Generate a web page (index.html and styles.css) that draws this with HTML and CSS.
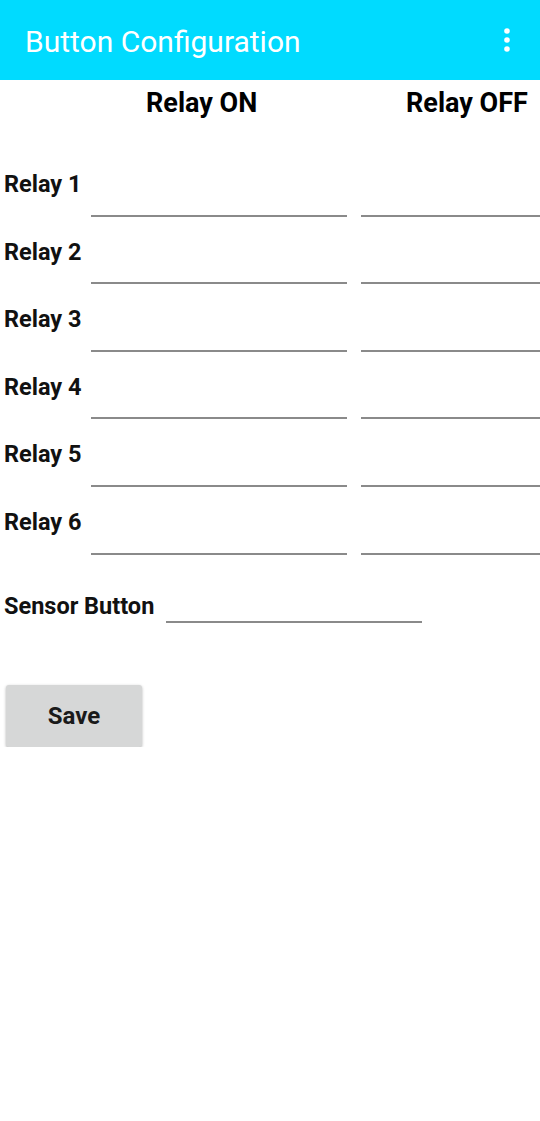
FILE: index.html
```html
<!DOCTYPE html>
<html>
<head>
<meta charset="utf-8">
<link rel="stylesheet" href="styles.css">
</head>
<body>
<header class="appbar">
  <h1 class="title">Button Configuration</h1>
  <svg class="menu" width="8" height="26" viewBox="0 0 8 26"><circle cx="4" cy="4" r="2.8" fill="#fff"/><circle cx="4" cy="13" r="2.8" fill="#fff"/><circle cx="4" cy="22" r="2.8" fill="#fff"/></svg>
</header>
<main class="form">
  <div class="cols">
    <span></span>
    <span class="col-on">Relay ON</span>
    <span class="col-off">Relay OFF</span>
  </div>
  <div class="row"><label class="label">Relay 1</label><input class="field"><input class="field off"></div>
  <div class="row"><label class="label">Relay 2</label><input class="field"><input class="field off"></div>
  <div class="row"><label class="label">Relay 3</label><input class="field"><input class="field off"></div>
  <div class="row"><label class="label">Relay 4</label><input class="field"><input class="field off"></div>
  <div class="row"><label class="label">Relay 5</label><input class="field"><input class="field off"></div>
  <div class="row"><label class="label">Relay 6</label><input class="field"><input class="field off"></div>
  <div class="sensor"><label class="label sensor-label">Sensor Button</label><input class="field"></div>
  <button class="save">Save</button>
</main>
</body>
</html>
```
FILE: styles.css
```css
* { box-sizing: border-box; }
html, body { margin: 0; padding: 0; background: #fff; }
body { font-family: Roboto, "Liberation Sans", sans-serif; color: #111; width: 540px; }

.appbar {
  height: 80px;
  background: #00dbff;
  display: flex;
  align-items: center;
  justify-content: space-between;
  padding: 3px 29px 0 25px;
}
.title {
  margin: 0;
  font-size: 30px;
  line-height: 35px;
  font-weight: 400;
  color: #fff;
}
.menu { display: block; margin-top: -4px; }

.cols {
  display: grid;
  grid-template-columns: 87px 256px 1fr;
  padding: 8px 0 0 4px;
  height: 69px;
  font-size: 27px;
  line-height: 30px;
  font-weight: 700;
  color: #000;
}
.col-on { padding-left: 55px; }
.col-off { padding-left: 59px; }

.row {
  display: grid;
  grid-template-columns: 87px 256px 1fr;
  padding-left: 4px;
  height: 67.6px;
}
.label {
  font-size: 23.5px;
  line-height: 28px;
  font-weight: 700;
  color: #111;
  align-self: start;
  margin-top: 21px;
  white-space: nowrap;
}
.field {
  align-self: end;
  width: 100%;
  height: 40px;
  border: none;
  border-bottom: 2px solid #8a8a8a;
  background: transparent;
  outline: none;
  padding: 0;
  font: inherit;
}
.field.off { margin-left: 14px; width: calc(100% - 14px); }

.sensor {
  display: grid;
  grid-template-columns: 162px 256px;
  padding-left: 4px;
  height: 68px;
  align-items: end;
}
.sensor-label { align-self: end; margin: 0 0 3px 0; }

.save {
  display: block;
  margin: 62px 0 0 6px;
  width: 136px;
  height: 62px;
  border: none;
  border-radius: 3px;
  background: #d6d7d7;
  box-shadow: 0 1px 3px rgba(0,0,0,0.3);
  font-family: Roboto, "Liberation Sans", sans-serif;
  font-size: 24px;
  font-weight: 700;
  color: #1a1a1a;
  padding: 0;
}
```
